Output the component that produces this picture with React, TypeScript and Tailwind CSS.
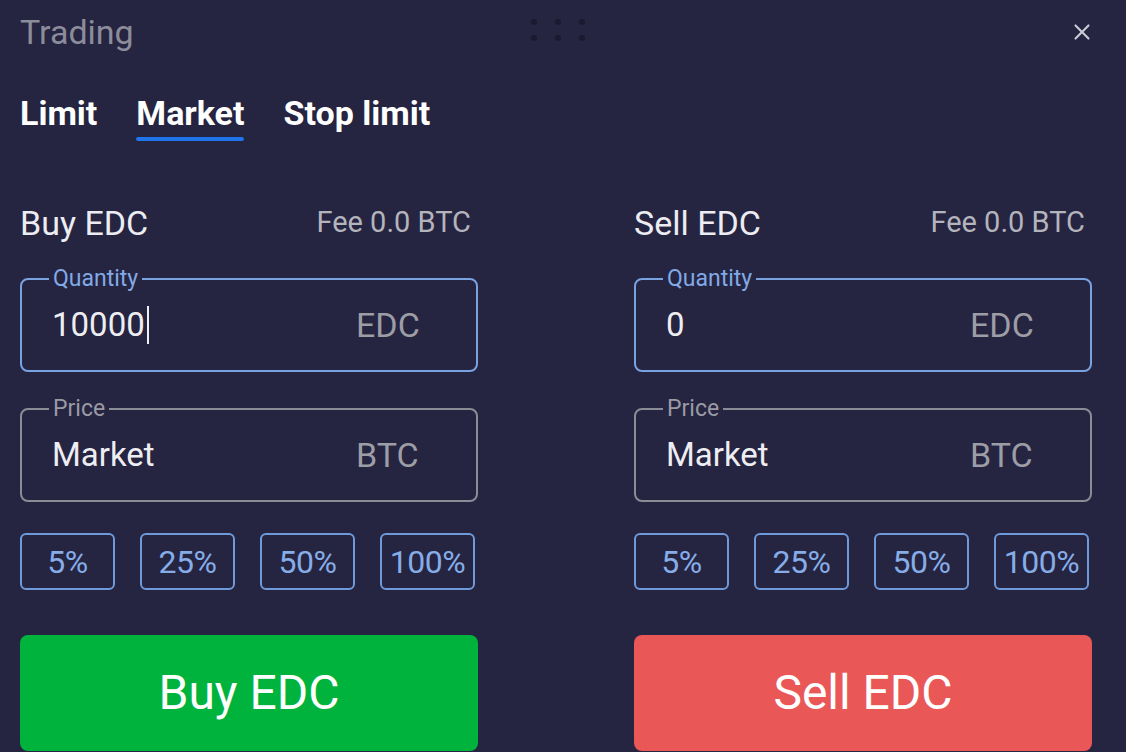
import React from "react";
import { X } from "lucide-react";

const percents = ["5%", "25%", "50%", "100%"];

const Field = ({
  label,
  value,
  unit,
  active,
  cursor,
}: {
  label: string;
  value: string;
  unit: string;
  active?: boolean;
  cursor?: boolean;
}) => {
  return (
    <div
      className={`relative h-[94px] rounded-[8px] border-2 flex items-center pl-[30px] pr-[20px] ${
        active ? "border-[#79a2e0]" : "border-[#8c8c96]"
      }`}
    >
      <span
        className={`absolute left-[27px] top-[-15px] px-[4px] bg-[#252441] text-[23px] leading-[28px] ${
          active ? "text-[#82aae6]" : "text-[#9a9aa4]"
        }`}
      >
        {label}
      </span>
      <div className="flex-1 flex items-center text-[33px] text-[#eeeef2]">
        {value}
        {cursor && <span className="ml-[2px] w-[2px] h-[38px] bg-[#f0f0f0]" />}
      </div>
      <span className="w-[100px] text-[34px] text-[#9d9da6]">{unit}</span>
    </div>
  );
};

const Side = ({ kind }: { kind: "buy" | "sell" }) => {
  const buy = kind === "buy";
  return (
    <div className="w-[458px] flex flex-col">
      <div className="h-[36px] flex items-center justify-between pr-[7px]">
        <span className="text-[34px] text-[#ececf2]">{buy ? "Buy EDC" : "Sell EDC"}</span>
        <span className="text-[29px] text-[#b4b4bc]">Fee 0.0 BTC</span>
      </div>
      <div className="mt-[37px]">
        <Field label="Quantity" value={buy ? "10000" : "0"} unit="EDC" active cursor={buy} />
      </div>
      <div className="mt-[36px]">
        <Field label="Price" value="Market" unit="BTC" />
      </div>
      <div className="mt-[31px] flex justify-between pr-[3px]">
        {percents.map((p) => (
          <button
            key={p}
            className="w-[95px] h-[57px] rounded-[6px] border-2 border-[#6f9ad9] text-[32px] tracking-[-0.5px] text-[#86ade8] flex items-center justify-center"
          >
            {p}
          </button>
        ))}
      </div>
      <button
        className={`mt-[45px] h-[116px] rounded-[8px] text-[48px] text-white flex items-center justify-center ${
          buy ? "bg-[#00b33c]" : "bg-[#ea5757]"
        }`}
      >
        {buy ? "Buy EDC" : "Sell EDC"}
      </button>
    </div>
  );
};

export default function App() {
  return (
    <div
      className="w-[1126px] h-[752px] overflow-hidden bg-[#252441] pl-[20px] pr-[34px]"
      style={{ fontFamily: "Roboto, 'Noto Sans', sans-serif" }}
    >
      <div className="h-[64px] grid grid-cols-[1fr_auto_1fr] items-center">
        <span className="text-[34px] text-[#8c8c9a]">Trading</span>
        <div className="grid grid-cols-3 gap-x-[18px] gap-y-[10px] ml-[4px] mb-[4px]">
          {[0, 1, 2, 3, 4, 5].map((i) => (
            <span key={i} className="w-[6px] h-[6px] rounded-full bg-[#1a1a30]" />
          ))}
        </div>
        <div className="flex justify-end">
          <X className="w-[26px] h-[26px] text-[#c9c9d2] mr-[-3px]" strokeWidth={2} />
        </div>
      </div>

      <div className="mt-[31px] flex gap-[39px]">
        {["Limit", "Market", "Stop limit"].map((t) => (
          <div key={t} className="flex flex-col">
            <span className="text-[34px] leading-[36px] font-bold text-white">{t}</span>
            <span
              className={`mt-[6px] h-[4px] rounded-full ${t === "Market" ? "bg-[#1e74e8]" : "bg-transparent"}`}
            />
          </div>
        ))}
      </div>

      <div className="mt-[64px] flex justify-between">
        <Side kind="buy" />
        <Side kind="sell" />
      </div>
    </div>
  );
}
